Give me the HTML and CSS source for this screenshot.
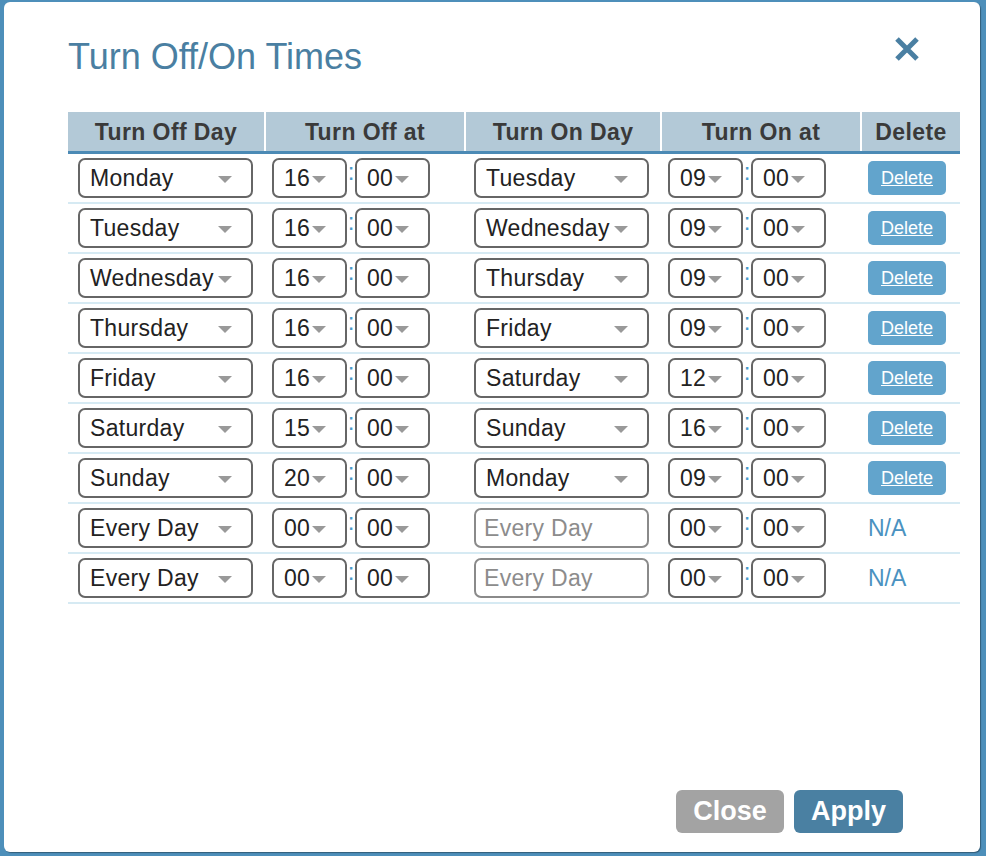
FILE: index.html
```html
<!DOCTYPE html>
<html lang="en">
<head>
<meta charset="utf-8">
<title>Turn Off/On Times</title>
<link rel="stylesheet" href="styles.css">
</head>
<body>
<div class="dialog">
  <div class="dlg-head">
    <h1 class="title">Turn Off/On Times</h1>
    <button class="x-btn" aria-label="Close">
      <svg width="26" height="26" viewBox="0 0 26 26"><path d="M3 3 L23 23 M23 3 L3 23" stroke="#4a7fa2" stroke-width="5" stroke-linecap="butt"/></svg>
    </button>
  </div>

  <div class="grid">
    <div class="row head-row">
      <div class="th">Turn Off Day</div>
      <div class="th">Turn Off at</div>
      <div class="th">Turn On Day</div>
      <div class="th">Turn On at</div>
      <div class="th">Delete</div>
    </div>

    <div class="row">
      <div class="cell c1"><div class="sel day"><span class="val">Monday</span><i class="arr"></i></div></div>
      <div class="cell c2"><div class="time"><div class="sel tm"><span class="val">16</span><i class="arr"></i></div><span class="colon">:</span><div class="sel tm"><span class="val">00</span><i class="arr"></i></div></div></div>
      <div class="cell c3"><div class="sel day"><span class="val">Tuesday</span><i class="arr"></i></div></div>
      <div class="cell c4"><div class="time"><div class="sel tm"><span class="val">09</span><i class="arr"></i></div><span class="colon">:</span><div class="sel tm"><span class="val">00</span><i class="arr"></i></div></div></div>
      <div class="cell c5"><button class="del">Delete</button></div>
    </div>

    <div class="row">
      <div class="cell c1"><div class="sel day"><span class="val">Tuesday</span><i class="arr"></i></div></div>
      <div class="cell c2"><div class="time"><div class="sel tm"><span class="val">16</span><i class="arr"></i></div><span class="colon">:</span><div class="sel tm"><span class="val">00</span><i class="arr"></i></div></div></div>
      <div class="cell c3"><div class="sel day"><span class="val">Wednesday</span><i class="arr"></i></div></div>
      <div class="cell c4"><div class="time"><div class="sel tm"><span class="val">09</span><i class="arr"></i></div><span class="colon">:</span><div class="sel tm"><span class="val">00</span><i class="arr"></i></div></div></div>
      <div class="cell c5"><button class="del">Delete</button></div>
    </div>

    <div class="row">
      <div class="cell c1"><div class="sel day"><span class="val">Wednesday</span><i class="arr"></i></div></div>
      <div class="cell c2"><div class="time"><div class="sel tm"><span class="val">16</span><i class="arr"></i></div><span class="colon">:</span><div class="sel tm"><span class="val">00</span><i class="arr"></i></div></div></div>
      <div class="cell c3"><div class="sel day"><span class="val">Thursday</span><i class="arr"></i></div></div>
      <div class="cell c4"><div class="time"><div class="sel tm"><span class="val">09</span><i class="arr"></i></div><span class="colon">:</span><div class="sel tm"><span class="val">00</span><i class="arr"></i></div></div></div>
      <div class="cell c5"><button class="del">Delete</button></div>
    </div>

    <div class="row">
      <div class="cell c1"><div class="sel day"><span class="val">Thursday</span><i class="arr"></i></div></div>
      <div class="cell c2"><div class="time"><div class="sel tm"><span class="val">16</span><i class="arr"></i></div><span class="colon">:</span><div class="sel tm"><span class="val">00</span><i class="arr"></i></div></div></div>
      <div class="cell c3"><div class="sel day"><span class="val">Friday</span><i class="arr"></i></div></div>
      <div class="cell c4"><div class="time"><div class="sel tm"><span class="val">09</span><i class="arr"></i></div><span class="colon">:</span><div class="sel tm"><span class="val">00</span><i class="arr"></i></div></div></div>
      <div class="cell c5"><button class="del">Delete</button></div>
    </div>

    <div class="row">
      <div class="cell c1"><div class="sel day"><span class="val">Friday</span><i class="arr"></i></div></div>
      <div class="cell c2"><div class="time"><div class="sel tm"><span class="val">16</span><i class="arr"></i></div><span class="colon">:</span><div class="sel tm"><span class="val">00</span><i class="arr"></i></div></div></div>
      <div class="cell c3"><div class="sel day"><span class="val">Saturday</span><i class="arr"></i></div></div>
      <div class="cell c4"><div class="time"><div class="sel tm"><span class="val">12</span><i class="arr"></i></div><span class="colon">:</span><div class="sel tm"><span class="val">00</span><i class="arr"></i></div></div></div>
      <div class="cell c5"><button class="del">Delete</button></div>
    </div>

    <div class="row">
      <div class="cell c1"><div class="sel day"><span class="val">Saturday</span><i class="arr"></i></div></div>
      <div class="cell c2"><div class="time"><div class="sel tm"><span class="val">15</span><i class="arr"></i></div><span class="colon">:</span><div class="sel tm"><span class="val">00</span><i class="arr"></i></div></div></div>
      <div class="cell c3"><div class="sel day"><span class="val">Sunday</span><i class="arr"></i></div></div>
      <div class="cell c4"><div class="time"><div class="sel tm"><span class="val">16</span><i class="arr"></i></div><span class="colon">:</span><div class="sel tm"><span class="val">00</span><i class="arr"></i></div></div></div>
      <div class="cell c5"><button class="del">Delete</button></div>
    </div>

    <div class="row">
      <div class="cell c1"><div class="sel day"><span class="val">Sunday</span><i class="arr"></i></div></div>
      <div class="cell c2"><div class="time"><div class="sel tm"><span class="val">20</span><i class="arr"></i></div><span class="colon">:</span><div class="sel tm"><span class="val">00</span><i class="arr"></i></div></div></div>
      <div class="cell c3"><div class="sel day"><span class="val">Monday</span><i class="arr"></i></div></div>
      <div class="cell c4"><div class="time"><div class="sel tm"><span class="val">09</span><i class="arr"></i></div><span class="colon">:</span><div class="sel tm"><span class="val">00</span><i class="arr"></i></div></div></div>
      <div class="cell c5"><button class="del">Delete</button></div>
    </div>

    <div class="row">
      <div class="cell c1"><div class="sel day"><span class="val">Every Day</span><i class="arr"></i></div></div>
      <div class="cell c2"><div class="time"><div class="sel tm"><span class="val">00</span><i class="arr"></i></div><span class="colon">:</span><div class="sel tm"><span class="val">00</span><i class="arr"></i></div></div></div>
      <div class="cell c3"><div class="sel ph"><span class="val">Every Day</span></div></div>
      <div class="cell c4"><div class="time"><div class="sel tm"><span class="val">00</span><i class="arr"></i></div><span class="colon">:</span><div class="sel tm"><span class="val">00</span><i class="arr"></i></div></div></div>
      <div class="cell c5"><span class="na">N/A</span></div>
    </div>

    <div class="row">
      <div class="cell c1"><div class="sel day"><span class="val">Every Day</span><i class="arr"></i></div></div>
      <div class="cell c2"><div class="time"><div class="sel tm"><span class="val">00</span><i class="arr"></i></div><span class="colon">:</span><div class="sel tm"><span class="val">00</span><i class="arr"></i></div></div></div>
      <div class="cell c3"><div class="sel ph"><span class="val">Every Day</span></div></div>
      <div class="cell c4"><div class="time"><div class="sel tm"><span class="val">00</span><i class="arr"></i></div><span class="colon">:</span><div class="sel tm"><span class="val">00</span><i class="arr"></i></div></div></div>
      <div class="cell c5"><span class="na">N/A</span></div>
    </div>
  </div>

  <div class="footer">
    <button class="btn btn-close">Close</button>
    <button class="btn btn-apply">Apply</button>
  </div>
</div>
</body>
</html>
```

FILE: styles.css
```css
* { box-sizing: border-box; }

html, body {
  margin: 0;
  padding: 0;
}

body {
  width: 986px;
  height: 856px;
  background: #4d8fba;
  font-family: "Liberation Sans", Arial, Helvetica, sans-serif;
  overflow: hidden;
}

.dialog {
  margin: 2px 6px 4px 4px;
  height: 850px;
  background: #ffffff;
  border-radius: 6px;
  box-shadow: 1px 1px 1px rgba(0,0,0,0.35);
  padding: 34px 20px 19px 64px;
  display: flex;
  flex-direction: column;
}

.dlg-head {
  display: flex;
  justify-content: space-between;
  align-items: flex-start;
  height: 76px;
}

.title {
  margin: 0;
  font-size: 36px;
  line-height: 42px;
  font-weight: normal;
  color: #4a7fa2;
}

.x-btn {
  margin: 0 40px 0 0;
  padding: 0;
  border: 0;
  background: transparent;
  width: 26px;
  height: 26px;
  display: flex;
}

.row {
  display: grid;
  grid-template-columns: 196px 198px 194px 198px 98px;
  column-gap: 2px;
  width: 892px;
}

.head-row {
  border-bottom: 3px solid #4b8ab5;
}

.th {
  background: #b3c9d7;
  height: 39px;
  padding-top: 2px;
  display: flex;
  align-items: center;
  justify-content: center;
  font-weight: bold;
  font-size: 23px;
  letter-spacing: 0.4px;
  color: #3a3a3a;
}

.row:not(.head-row) {
  height: 50px;
  border-bottom: 2px solid #d6eaf3;
}

.cell {
  display: flex;
  align-items: center;
}

.c1 { padding-left: 10px; }
.c2 { padding-left: 6px; }
.c3 { padding-left: 8px; }
.c4 { padding-left: 6px; }
.c5 { padding-left: 6px; }

.sel {
  height: 40px;
  border: 2px solid #666666;
  border-radius: 7px;
  display: flex;
  align-items: center;
  padding-left: 10px;
  font-size: 23px;
  letter-spacing: 0.3px;
  color: #222222;
  background: #fff;
}

.day, .ph {
  width: 175px;
}

.day .val {
  min-width: 126px;
  white-space: nowrap;
}

.tm {
  width: 75px;
}

.arr {
  display: block;
  width: 0;
  height: 0;
  margin-left: 2px;
  margin-top: 2px;
  border-left: 7px solid transparent;
  border-right: 7px solid transparent;
  border-top: 7px solid #999999;
}

.ph {
  border-color: #8a8a8a;
  color: #8c8c8c;
  padding-left: 8px;
}

.time {
  display: flex;
  align-items: center;
}

.colon {
  width: 8px;
  text-align: center;
  font-size: 24px;
  line-height: 28px;
  color: #4a9acb;
  margin-bottom: 13px;
}

.del {
  width: 78px;
  height: 34px;
  border: 0;
  border-radius: 5px;
  background: #62a4cc;
  color: #ffffff;
  font-family: inherit;
  font-size: 18px;
  text-decoration: underline;
  padding: 0;
}

.na {
  font-size: 23px;
  color: #4a92c0;
}

.footer {
  margin-top: auto;
  display: flex;
  justify-content: flex-end;
  gap: 10px;
  padding-right: 57px;
}

.btn {
  height: 43px;
  border: 0;
  border-radius: 6px;
  color: #ffffff;
  font-family: inherit;
  font-weight: bold;
  font-size: 27px;
  padding: 0;
}

.btn-close {
  width: 108px;
  background: #a3a3a3;
}

.btn-apply {
  width: 109px;
  background: #4a80a2;
}
```
